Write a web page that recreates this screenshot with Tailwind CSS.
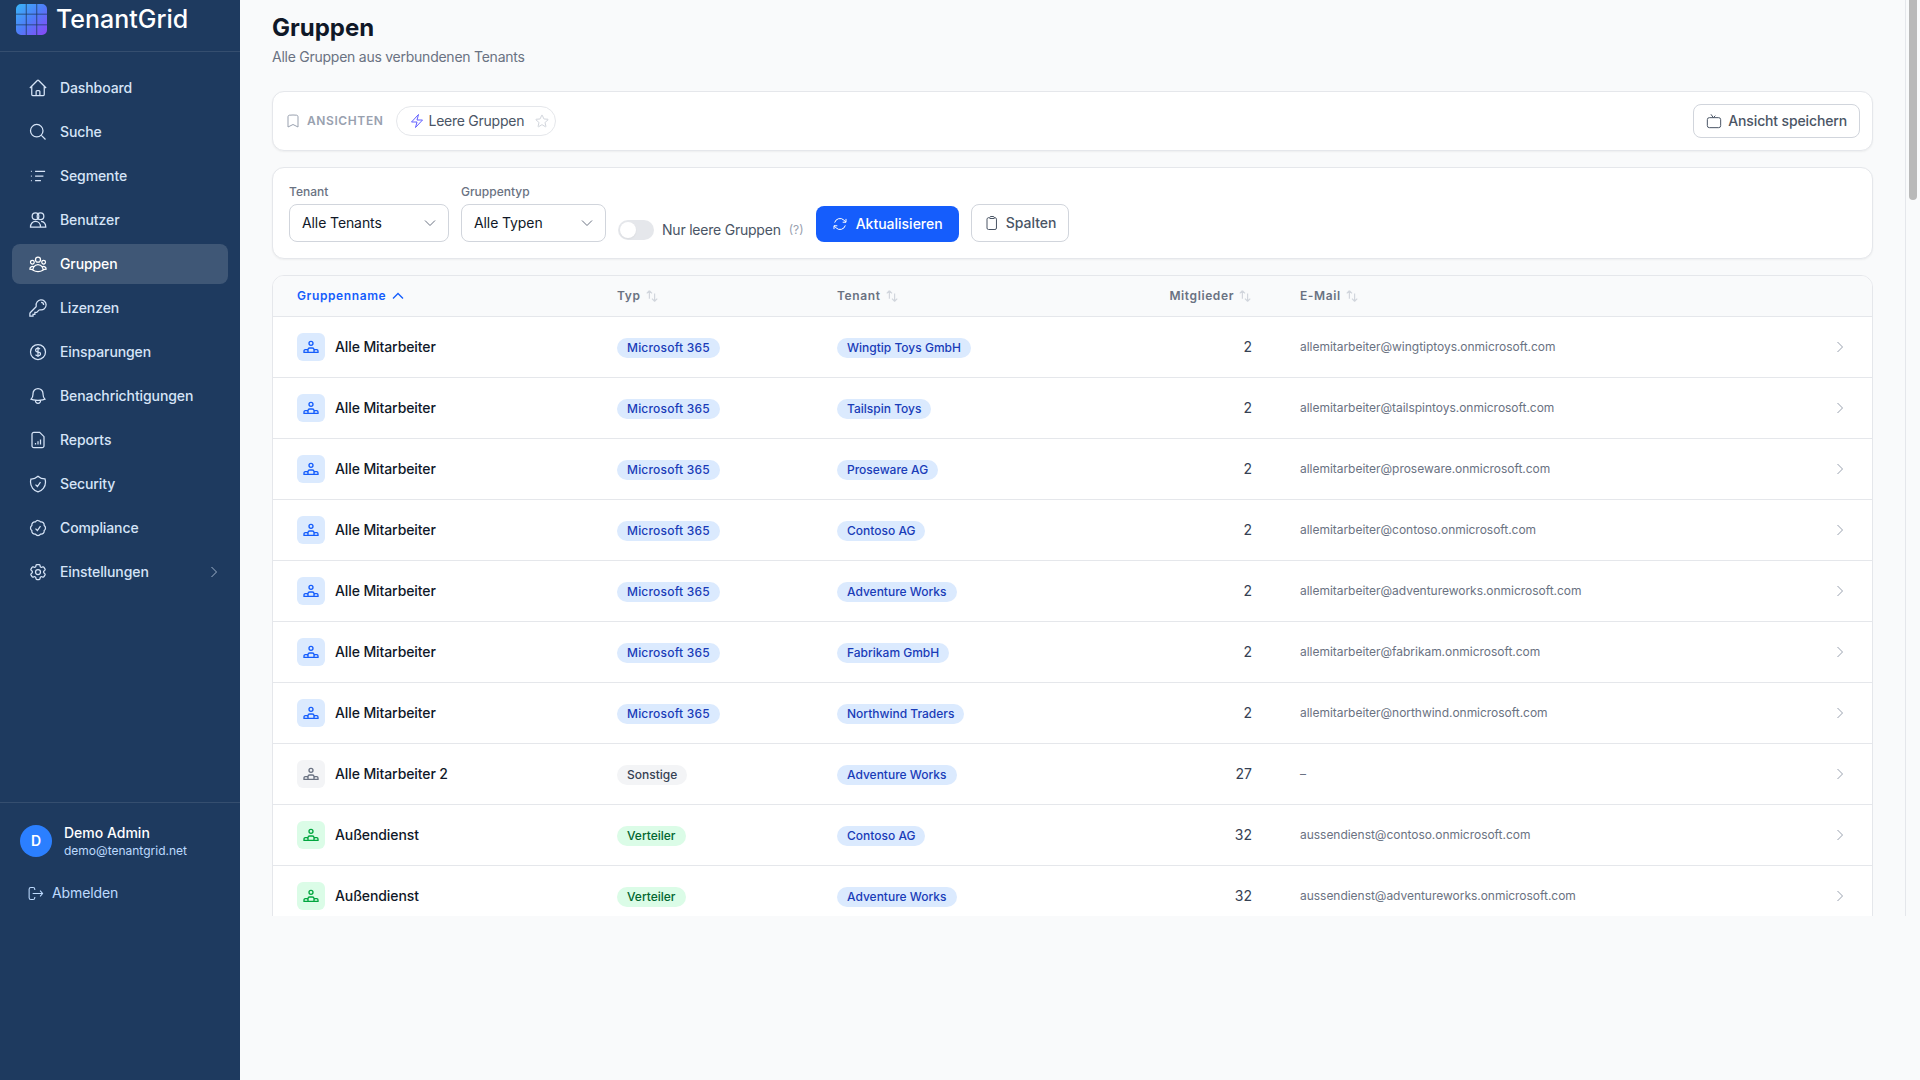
<!DOCTYPE html>
<html lang="de">
<head>
    <meta charset="UTF-8">
    <title>TenantGrid - Gruppen</title>
    <script src="https://cdn.jsdelivr.net/npm/@tailwindcss/browser@4"></script>
</head>
<body class="h-screen flex overflow-hidden bg-[#f9fafb] font-[Inter,sans-serif]">
    <svg class="hidden">
        <symbol id="i-home" viewBox="0 0 24 24"><path d="M2.25 12l8.954-8.955c.44-.439 1.152-.439 1.591 0L21.75 12M4.5 9.75v10.125c0 .621.504 1.125 1.125 1.125H9.75v-4.875c0-.621.504-1.125 1.125-1.125h2.25c.621 0 1.125.504 1.125 1.125V21h4.125c.621 0 1.125-.504 1.125-1.125V9.75M8.25 21h8.25"/></symbol>
        <symbol id="i-search" viewBox="0 0 24 24"><path d="m21 21-5.197-5.197m0 0A7.5 7.5 0 1 0 5.196 5.196a7.5 7.5 0 0 0 10.607 10.607Z"/></symbol>
        <symbol id="i-list" viewBox="0 0 24 24"><path d="M8.5 6.5h12M8.5 12h10M8.5 17.5h7M3.5 6.5h1M3.5 12h1M3.5 17.5h1"/></symbol>
        <symbol id="i-users" viewBox="0 0 24 24"><circle cx="9" cy="7.5" r="4"/><circle cx="15" cy="7.5" r="4"/><path d="M3 20.5c0-4 2.5-6.8 6-6.8s6 2.8 6 6.8H3ZM15 20.5h6.3c0-3.8-2.2-6.4-5.6-6.8"/></symbol>
        <symbol id="i-group" viewBox="0 0 24 24"><path d="M18 18.72a9.094 9.094 0 0 0 3.741-.479 3 3 0 0 0-4.682-2.72m.94 3.198.001.031c0 .225-.012.447-.037.666A11.944 11.944 0 0 1 12 21c-2.17 0-4.207-.576-5.963-1.584A6.062 6.062 0 0 1 6 18.719m12 0a5.971 5.971 0 0 0-.941-3.197m0 0A5.995 5.995 0 0 0 12 12.75a5.995 5.995 0 0 0-5.058 2.772m0 0a3 3 0 0 0-4.681 2.72 8.986 8.986 0 0 0 3.74.477m.94-3.197a5.971 5.971 0 0 0-.94 3.197M15 6.75a3 3 0 1 1-6 0 3 3 0 0 1 6 0Zm6 3a2.25 2.25 0 1 1-4.5 0 2.25 2.25 0 0 1 4.5 0Zm-13.5 0a2.25 2.25 0 1 1-4.5 0 2.25 2.25 0 0 1 4.5 0Z"/></symbol>
        <symbol id="i-key" viewBox="0 0 24 24"><path d="M15.75 5.25a3 3 0 0 1 3 3m3 0a6 6 0 0 1-7.029 5.912c-.563-.097-1.159.026-1.563.43L10.5 17.25H8.25v2.25H6v2.25H2.25v-2.818c0-.597.237-1.17.659-1.591l6.499-6.499c.404-.404.527-1 .43-1.563A6 6 0 1 1 21.75 8.25Z"/></symbol>
        <symbol id="i-dollar" viewBox="0 0 24 24"><path d="M12 6v12m-3-2.818.879.659c1.171.879 3.07.879 4.242 0 1.172-.879 1.172-2.303 0-3.182C13.536 12.219 12.768 12 12 12c-.725 0-1.45-.22-2.003-.659-1.106-.879-1.106-2.303 0-3.182s2.9-.879 4.006 0l.415.33M21 12a9 9 0 1 1-18 0 9 9 0 0 1 18 0Z"/></symbol>
        <symbol id="i-bell" viewBox="0 0 24 24"><path d="M14.857 17.082a23.848 23.848 0 0 0 5.454-1.31A8.967 8.967 0 0 1 18 9.75V9A6 6 0 0 0 6 9v.75a8.967 8.967 0 0 1-2.312 6.022c1.733.64 3.56 1.085 5.455 1.31m5.714 0a24.255 24.255 0 0 1-5.714 0m5.714 0a3 3 0 1 1-5.714 0"/></symbol>
        <symbol id="i-report" viewBox="0 0 24 24"><path d="M14 2.8H7A2.2 2.2 0 0 0 4.8 5v14A2.2 2.2 0 0 0 7 21.2h10a2.2 2.2 0 0 0 2.2-2.2V8L14 2.8ZM9 17.5v-2M12 17.5v-4M15 17.5v-6"/></symbol>
        <symbol id="i-shield" viewBox="0 0 24 24"><path d="M9 12.75 11.25 15 15 9.75m-3-7.036A11.959 11.959 0 0 1 3.598 6 11.99 11.99 0 0 0 3 9.749c0 5.592 3.824 10.29 9 11.623 5.176-1.332 9-6.03 9-11.622 0-1.31-.21-2.571-.598-3.751h-.152c-3.196 0-6.1-1.248-8.25-3.285Z"/></symbol>
        <symbol id="i-badge" viewBox="0 0 24 24"><path d="M9 12.75 11.25 15 15 9.75M21 12c0 1.268-.63 2.39-1.593 3.068a3.745 3.745 0 0 1-1.043 3.296 3.745 3.745 0 0 1-3.296 1.043A3.745 3.745 0 0 1 12 21c-1.268 0-2.39-.63-3.068-1.593a3.746 3.746 0 0 1-3.296-1.043 3.745 3.745 0 0 1-1.043-3.296A3.745 3.745 0 0 1 3 12c0-1.268.63-2.39 1.593-3.068a3.745 3.745 0 0 1 1.043-3.296 3.746 3.746 0 0 1 3.296-1.043A3.746 3.746 0 0 1 12 3c1.268 0 2.39.63 3.068 1.593a3.746 3.746 0 0 1 3.296 1.043 3.746 3.746 0 0 1 1.043 3.296A3.745 3.745 0 0 1 21 12Z"/></symbol>
        <symbol id="i-cog" viewBox="0 0 24 24"><path d="M9.594 3.94c.09-.542.56-.94 1.11-.94h2.593c.55 0 1.02.398 1.11.94l.213 1.281c.063.374.313.686.645.87.074.04.147.083.22.127.325.196.72.257 1.075.124l1.217-.456a1.125 1.125 0 0 1 1.37.49l1.296 2.247a1.125 1.125 0 0 1-.26 1.431l-1.003.827c-.293.241-.438.613-.43.992a7.723 7.723 0 0 1 0 .255c-.008.378.137.75.43.991l1.004.827c.424.35.534.955.26 1.43l-1.298 2.247a1.125 1.125 0 0 1-1.369.491l-1.217-.456c-.355-.133-.75-.072-1.076.124a6.47 6.47 0 0 1-.22.128c-.331.183-.581.495-.644.869l-.213 1.281c-.09.543-.56.94-1.11.94h-2.594c-.55 0-1.019-.398-1.11-.94l-.213-1.281c-.062-.374-.312-.686-.644-.87a6.52 6.52 0 0 1-.22-.127c-.325-.196-.72-.257-1.076-.124l-1.217.456a1.125 1.125 0 0 1-1.369-.49l-1.297-2.247a1.125 1.125 0 0 1 .26-1.431l1.004-.827c.292-.24.437-.613.43-.991a6.932 6.932 0 0 1 0-.255c.007-.38-.138-.751-.43-.992l-1.004-.827a1.125 1.125 0 0 1-.26-1.43l1.297-2.247a1.125 1.125 0 0 1 1.37-.491l1.216.456c.356.133.751.072 1.076-.124.072-.044.146-.086.22-.128.332-.183.582-.495.644-.869l.214-1.28Z"/><path d="M15 12a3 3 0 1 1-6 0 3 3 0 0 1 6 0Z"/></symbol>
        <symbol id="i-logout" viewBox="0 0 24 24"><path d="M11 7V6a2.5 2.5 0 0 0-2.5-2.5h-3A2.5 2.5 0 0 0 3 6v12a2.5 2.5 0 0 0 2.5 2.5h3A2.5 2.5 0 0 0 11 18v-1M8 12h14M18.5 8l3.5 4-3.5 4"/></symbol>
        <symbol id="i-bookmark" viewBox="0 0 24 24"><path d="M17.593 3.322c1.1.128 1.907 1.077 1.907 2.185V21L12 17.25 4.5 21V5.507c0-1.108.806-2.057 1.907-2.185a48.507 48.507 0 0 1 11.186 0Z"/></symbol>
        <symbol id="i-bolt" viewBox="0 0 24 24"><path d="m3.75 13.5 10.5-11.25L12 10.5h8.25L9.75 21.75 12 13.5H3.75Z"/></symbol>
        <symbol id="i-star" viewBox="0 0 24 24"><path d="M11.48 3.499a.562.562 0 0 1 1.04 0l2.125 5.111a.563.563 0 0 0 .475.345l5.518.442c.499.04.701.663.321.988l-4.204 3.602a.563.563 0 0 0-.182.557l1.285 5.385a.562.562 0 0 1-.84.61l-4.725-2.885a.562.562 0 0 0-.586 0L6.982 20.54a.562.562 0 0 1-.84-.61l1.285-5.386a.562.562 0 0 0-.182-.557l-4.204-3.602a.562.562 0 0 1 .321-.988l5.518-.442a.563.563 0 0 0 .475-.345L11.48 3.5Z"/></symbol>
        <symbol id="i-save" viewBox="0 0 24 24"><path d="M5 7h14a3 3 0 0 1 3 3v9a3 3 0 0 1-3 3H5a3 3 0 0 1-3-3v-9a3 3 0 0 1 3-3ZM7.5 2 11 7l3-3"/></symbol>
        <symbol id="i-refresh" viewBox="0 0 24 24"><path d="M16.023 9.348h4.992v-.001M2.985 19.644v-4.992m0 0h4.992m-4.993 0 3.181 3.183a8.25 8.25 0 0 0 13.803-3.7M4.031 9.865a8.25 8.25 0 0 1 13.803-3.7l3.181 3.182m0-4.991v4.99"/></symbol>
        <symbol id="i-clipboard" viewBox="0 0 24 24"><path d="M15.666 3.888A2.25 2.25 0 0 0 13.5 2.25h-3c-1.03 0-1.9.693-2.166 1.638m7.332 0c.055.194.084.4.084.612v0a.75.75 0 0 1-.75.75H9a.75.75 0 0 1-.75-.75v0c0-.212.03-.418.084-.612m7.332 0c.369.03.739.067 1.108.11 1.1.128 1.907 1.077 1.907 2.185V19.5a2.25 2.25 0 0 1-2.25 2.25H6.75A2.25 2.25 0 0 1 4.5 19.5V6.257c0-1.108.806-2.057 1.907-2.185.37-.043.74-.08 1.109-.11"/></symbol>
        <symbol id="i-down" viewBox="0 0 24 24"><path d="m19.5 8.25-7.5 7.5-7.5-7.5"/></symbol>
        <symbol id="i-up" viewBox="0 0 24 24"><path d="m4.5 15.75 7.5-7.5 7.5 7.5"/></symbol>
        <symbol id="i-right" viewBox="0 0 24 24"><path d="m8.25 4.5 7.5 7.5-7.5 7.5"/></symbol>
        <symbol id="i-sort" viewBox="0 0 24 24"><path d="M3 7.5 7.5 3m0 0L12 7.5M7.5 3v13.5m13.5 0L16.5 21m0 0L12 16.5m4.5 4.5V7.5"/></symbol>
        <symbol id="i-org" viewBox="0 0 24 24"><circle cx="12" cy="6.5" r="3"/><path d="M7.5 20v-4a2.5 2.5 0 0 1 2.5-2.5h4a2.5 2.5 0 0 1 2.5 2.5v4M1.5 18a2 2 0 0 1 2-2h2a2 2 0 0 1 2 2v2h-6v-2ZM16.5 18a2 2 0 0 1 2-2h2a2 2 0 0 1 2 2v2h-6v-2ZM7.5 20h9"/></symbol>
    </svg>

    <!-- sidebar -->
    <aside class="w-60 shrink-0 h-screen bg-[#1e3a5f]">
        <div class="h-[916px] flex flex-col">
            <div class="h-[52px] shrink-0 border-b border-white/10 flex items-start pl-4 pt-1 gap-[9px]">
                <svg class="w-[31px] h-[31px] shrink-0" viewBox="0 0 31 31">
                    <defs>
                        <linearGradient id="logo" gradientUnits="userSpaceOnUse" x1="0" y1="0" x2="31" y2="31">
                            <stop offset="0" stop-color="#38b6f8"/>
                            <stop offset="0.5" stop-color="#4f7cf8"/>
                            <stop offset="1" stop-color="#8b45f5"/>
                        </linearGradient>
                    </defs>
                    <path fill="url(#logo)" d="M5 0h4.8v9.8H0V5a5 5 0 0 1 5-5ZM10.6 0h9.8v9.8h-9.8ZM21.2 0H26a5 5 0 0 1 5 5v4.8h-9.8ZM0 10.6h9.8v9.8H0ZM10.6 10.6h9.8v9.8h-9.8ZM21.2 10.6H31v9.8h-9.8ZM0 21.2h9.8V31H5a5 5 0 0 1-5-5ZM10.6 21.2h9.8V31h-9.8ZM21.2 21.2H31V26a5 5 0 0 1-5 5h-4.8Z"/>
                </svg>
                <span class="text-[25px] leading-[30px] font-medium text-white">TenantGrid</span>
            </div>

            <nav class="flex-1 flex flex-col gap-1 px-3 pt-4 text-sm font-medium tracking-[-0.1px] text-[#d6e4f7]">
                <a class="h-10 flex items-center gap-3 px-4 rounded-lg"><svg class="w-5 h-5 fill-none stroke-current stroke-[1.5]"><use href="#i-home"/></svg>Dashboard</a>
                <a class="h-10 flex items-center gap-3 px-4 rounded-lg"><svg class="w-5 h-5 fill-none stroke-current stroke-[1.5]"><use href="#i-search"/></svg>Suche</a>
                <a class="h-10 flex items-center gap-3 px-4 rounded-lg"><svg class="w-5 h-5 fill-none stroke-current stroke-[1.5]"><use href="#i-list"/></svg>Segmente</a>
                <a class="h-10 flex items-center gap-3 px-4 rounded-lg"><svg class="w-5 h-5 fill-none stroke-current stroke-[1.5]"><use href="#i-users"/></svg>Benutzer</a>
                <a class="h-10 flex items-center gap-3 px-4 rounded-lg bg-white/15 text-white"><svg class="w-5 h-5 fill-none stroke-current stroke-[1.5]"><use href="#i-group"/></svg>Gruppen</a>
                <a class="h-10 flex items-center gap-3 px-4 rounded-lg"><svg class="w-5 h-5 fill-none stroke-current stroke-[1.5]"><use href="#i-key"/></svg>Lizenzen</a>
                <a class="h-10 flex items-center gap-3 px-4 rounded-lg"><svg class="w-5 h-5 fill-none stroke-current stroke-[1.5]"><use href="#i-dollar"/></svg>Einsparungen</a>
                <a class="h-10 flex items-center gap-3 px-4 rounded-lg"><svg class="w-5 h-5 fill-none stroke-current stroke-[1.5]"><use href="#i-bell"/></svg>Benachrichtigungen</a>
                <a class="h-10 flex items-center gap-3 px-4 rounded-lg"><svg class="w-5 h-5 fill-none stroke-current stroke-[1.5]"><use href="#i-report"/></svg>Reports</a>
                <a class="h-10 flex items-center gap-3 px-4 rounded-lg"><svg class="w-5 h-5 fill-none stroke-current stroke-[1.5]"><use href="#i-shield"/></svg>Security</a>
                <a class="h-10 flex items-center gap-3 px-4 rounded-lg"><svg class="w-5 h-5 fill-none stroke-current stroke-[1.5]"><use href="#i-badge"/></svg>Compliance</a>
                <a class="h-10 flex items-center gap-3 px-4 rounded-lg"><svg class="w-5 h-5 fill-none stroke-current stroke-[1.5]"><use href="#i-cog"/></svg>Einstellungen<svg class="w-4 h-4 ml-auto -mr-2.5 fill-none stroke-current stroke-[1.5] opacity-70"><use href="#i-right"/></svg></a>
            </nav>

            <div class="border-t border-white/10 pt-5 pb-[13px]">
                <div class="flex items-center gap-3 px-5">
                    <div class="w-8 h-8 rounded-full bg-blue-500 flex items-center justify-center text-sm font-semibold text-white">D</div>
                    <div>
                        <div class="text-sm leading-5 font-medium text-white">Demo Admin</div>
                        <div class="text-xs leading-4 text-blue-200">demo@tenantgrid.net</div>
                    </div>
                </div>
                <a class="mt-6 h-5 flex items-center gap-2 pl-[27px] text-sm tracking-[-0.1px] text-blue-200"><svg class="w-[17px] h-[17px] fill-none stroke-current stroke-[1.5]"><use href="#i-logout"/></svg>Abmelden</a>
            </div>
        </div>
    </aside>

    <main class="flex-1 min-w-0">
        <div class="h-[916px] flex overflow-hidden">
            <div class="flex-1 min-w-0 pl-8 pr-8 pt-3">
                <h1 class="text-2xl leading-8 font-bold text-gray-900">Gruppen</h1>
                <p class="mt-[3px] text-sm leading-5 tracking-[-0.25px] text-gray-500">Alle Gruppen aus verbundenen Tenants</p>

                <!-- gespeicherte Ansichten -->
                <div class="mt-6 h-[60px] flex items-center justify-between px-3 bg-white border border-gray-200 rounded-xl shadow-xs">
                    <div class="flex items-center">
                        <svg class="w-4 h-4 fill-none stroke-gray-400 stroke-[1.5]"><use href="#i-bookmark"/></svg>
                        <span class="ml-1.5 text-xs font-semibold tracking-wider text-gray-400">ANSICHTEN</span>
                        <div class="ml-[13px] h-[30px] flex items-center pl-3 pr-[5px] border border-gray-200 rounded-full text-sm tracking-[-0.25px] text-gray-600">
                            <svg class="w-4 h-4 mr-[3px] fill-none stroke-indigo-500 stroke-[1.5]"><use href="#i-bolt"/></svg>
                            Leere Gruppen
                            <svg class="w-4 h-4 ml-2.5 fill-none stroke-gray-300 stroke-[1.5]"><use href="#i-star"/></svg>
                        </div>
                    </div>
                    <button class="h-[34px] flex items-center gap-1.5 px-3 bg-white border border-gray-300 rounded-lg text-sm font-medium tracking-[-0.14px] text-gray-600">
                        <svg class="w-4 h-4 fill-none stroke-current stroke-[1.5]"><use href="#i-save"/></svg>
                        Ansicht speichern
                    </button>
                </div>

                <!-- filter -->
                <div class="mt-4 flex items-end gap-3 p-4 bg-white border border-gray-200 rounded-xl shadow-xs">
                    <div class="w-40">
                        <div class="mb-1 text-xs leading-4 font-medium text-gray-500">Tenant</div>
                        <div class="h-[38px] flex items-center justify-between pl-3 pr-2.5 border border-gray-300 rounded-lg text-sm tracking-[-0.1px] text-gray-900">Alle Tenants<svg class="w-4 h-4 fill-none stroke-gray-500 stroke-[1.5]"><use href="#i-down"/></svg></div>
                    </div>
                    <div class="w-[145px]">
                        <div class="mb-1 text-xs leading-4 font-medium text-gray-500">Gruppentyp</div>
                        <div class="h-[38px] flex items-center justify-between pl-3 pr-2.5 border border-gray-300 rounded-lg text-sm tracking-[-0.1px] text-gray-900">Alle Typen<svg class="w-4 h-4 fill-none stroke-gray-500 stroke-[1.5]"><use href="#i-down"/></svg></div>
                    </div>
                    <div class="flex items-center h-5 mb-0.5">
                        <div class="w-9 h-5 p-0.5 rounded-full bg-gray-200"><div class="w-4 h-4 rounded-full bg-white shadow-xs"></div></div>
                        <span class="ml-2 text-sm tracking-[-0.22px] text-gray-600">Nur leere Gruppen</span>
                        <span class="ml-2 text-xs text-gray-400">(?)</span>
                    </div>
                    <button class="h-9 flex items-center gap-2 px-4 bg-blue-600 rounded-lg text-sm font-medium text-white">
                        <svg class="w-4 h-4 fill-none stroke-current stroke-[1.5]"><use href="#i-refresh"/></svg>
                        Aktualisieren
                    </button>
                    <button class="h-[38px] flex items-center gap-1.5 px-3 bg-white border border-gray-300 rounded-lg text-sm font-medium text-gray-600">
                        <svg class="w-4 h-4 fill-none stroke-current stroke-[1.5]"><use href="#i-clipboard"/></svg>
                        Spalten
                    </button>
                </div>

                <!-- tabelle -->
                <div class="mt-4 bg-white border border-gray-200 rounded-t-xl overflow-hidden">
                    <table class="w-full table-fixed border-separate border-spacing-0">
                        <thead>
                            <tr class="bg-[#f9fafb] text-xs font-semibold tracking-wider text-gray-500 text-left">
                                <th class="w-[320px] h-[41px] pl-6 border-b border-gray-200 font-semibold text-blue-600"><span class="inline-flex items-center gap-1">Gruppenname<svg class="w-4 h-4 fill-none stroke-current stroke-2"><use href="#i-up"/></svg></span></th>
                                <th class="w-[220px] h-[41px] pl-6 border-b border-gray-200 font-semibold"><span class="inline-flex items-center gap-1">Typ<svg class="w-3.5 h-3.5 fill-none stroke-gray-300 stroke-2"><use href="#i-sort"/></svg></span></th>
                                <th class="w-[307px] h-[41px] pl-6 border-b border-gray-200 font-semibold"><span class="inline-flex items-center gap-1">Tenant<svg class="w-3.5 h-3.5 fill-none stroke-gray-300 stroke-2"><use href="#i-sort"/></svg></span></th>
                                <th class="w-[156px] h-[41px] pr-6 border-b border-gray-200 font-semibold text-right"><span class="inline-flex items-center gap-1">Mitglieder<svg class="w-3.5 h-3.5 fill-none stroke-gray-300 stroke-2"><use href="#i-sort"/></svg></span></th>
                                <th class="h-[41px] pl-6 border-b border-gray-200 font-semibold"><span class="inline-flex items-center gap-1">E-Mail<svg class="w-3.5 h-3.5 fill-none stroke-gray-300 stroke-2"><use href="#i-sort"/></svg></span></th>
                                <th class="w-[55px] h-[41px] border-b border-gray-200"></th>
                            </tr>
                        </thead>
                        <tbody>
                            <tr>
                                <td class="h-[61px] pl-6 border-b border-gray-200"><div class="flex items-center gap-2.5"><span class="w-7 h-7 flex items-center justify-center rounded-md bg-blue-100 text-blue-600"><svg class="w-4 h-4 fill-none stroke-current stroke-2"><use href="#i-org"/></svg></span><span class="text-sm font-medium tracking-[-0.1px] text-gray-900">Alle Mitarbeiter</span></div></td>
                                <td class="pl-6 border-b border-gray-200"><span class="block w-fit mt-[2px] px-2.5 text-xs leading-5 font-medium tracking-[0.2px] rounded-full bg-blue-100 text-blue-800">Microsoft 365</span></td>
                                <td class="pl-6 border-b border-gray-200"><span class="block w-fit mt-[2px] px-2.5 text-xs leading-5 font-medium rounded-full bg-blue-100 text-blue-800">Wingtip Toys GmbH</span></td>
                                <td class="pr-6 border-b border-gray-200 text-right text-sm text-gray-700">2</td>
                                <td class="pl-6 border-b border-gray-200 text-xs tracking-[-0.03px] text-gray-500">allemitarbeiter@wingtiptoys.onmicrosoft.com</td>
                                <td class="pr-6 border-b border-gray-200"><svg class="w-4 h-4 ml-auto fill-none stroke-gray-400 stroke-[1.5]"><use href="#i-right"/></svg></td>
                            </tr>
                            <tr>
                                <td class="h-[61px] pl-6 border-b border-gray-200"><div class="flex items-center gap-2.5"><span class="w-7 h-7 flex items-center justify-center rounded-md bg-blue-100 text-blue-600"><svg class="w-4 h-4 fill-none stroke-current stroke-2"><use href="#i-org"/></svg></span><span class="text-sm font-medium tracking-[-0.1px] text-gray-900">Alle Mitarbeiter</span></div></td>
                                <td class="pl-6 border-b border-gray-200"><span class="block w-fit mt-[2px] px-2.5 text-xs leading-5 font-medium tracking-[0.2px] rounded-full bg-blue-100 text-blue-800">Microsoft 365</span></td>
                                <td class="pl-6 border-b border-gray-200"><span class="block w-fit mt-[2px] px-2.5 text-xs leading-5 font-medium rounded-full bg-blue-100 text-blue-800">Tailspin Toys</span></td>
                                <td class="pr-6 border-b border-gray-200 text-right text-sm text-gray-700">2</td>
                                <td class="pl-6 border-b border-gray-200 text-xs tracking-[-0.03px] text-gray-500">allemitarbeiter@tailspintoys.onmicrosoft.com</td>
                                <td class="pr-6 border-b border-gray-200"><svg class="w-4 h-4 ml-auto fill-none stroke-gray-400 stroke-[1.5]"><use href="#i-right"/></svg></td>
                            </tr>
                            <tr>
                                <td class="h-[61px] pl-6 border-b border-gray-200"><div class="flex items-center gap-2.5"><span class="w-7 h-7 flex items-center justify-center rounded-md bg-blue-100 text-blue-600"><svg class="w-4 h-4 fill-none stroke-current stroke-2"><use href="#i-org"/></svg></span><span class="text-sm font-medium tracking-[-0.1px] text-gray-900">Alle Mitarbeiter</span></div></td>
                                <td class="pl-6 border-b border-gray-200"><span class="block w-fit mt-[2px] px-2.5 text-xs leading-5 font-medium tracking-[0.2px] rounded-full bg-blue-100 text-blue-800">Microsoft 365</span></td>
                                <td class="pl-6 border-b border-gray-200"><span class="block w-fit mt-[2px] px-2.5 text-xs leading-5 font-medium rounded-full bg-blue-100 text-blue-800">Proseware AG</span></td>
                                <td class="pr-6 border-b border-gray-200 text-right text-sm text-gray-700">2</td>
                                <td class="pl-6 border-b border-gray-200 text-xs tracking-[-0.03px] text-gray-500">allemitarbeiter@proseware.onmicrosoft.com</td>
                                <td class="pr-6 border-b border-gray-200"><svg class="w-4 h-4 ml-auto fill-none stroke-gray-400 stroke-[1.5]"><use href="#i-right"/></svg></td>
                            </tr>
                            <tr>
                                <td class="h-[61px] pl-6 border-b border-gray-200"><div class="flex items-center gap-2.5"><span class="w-7 h-7 flex items-center justify-center rounded-md bg-blue-100 text-blue-600"><svg class="w-4 h-4 fill-none stroke-current stroke-2"><use href="#i-org"/></svg></span><span class="text-sm font-medium tracking-[-0.1px] text-gray-900">Alle Mitarbeiter</span></div></td>
                                <td class="pl-6 border-b border-gray-200"><span class="block w-fit mt-[2px] px-2.5 text-xs leading-5 font-medium tracking-[0.2px] rounded-full bg-blue-100 text-blue-800">Microsoft 365</span></td>
                                <td class="pl-6 border-b border-gray-200"><span class="block w-fit mt-[2px] px-2.5 text-xs leading-5 font-medium rounded-full bg-blue-100 text-blue-800">Contoso AG</span></td>
                                <td class="pr-6 border-b border-gray-200 text-right text-sm text-gray-700">2</td>
                                <td class="pl-6 border-b border-gray-200 text-xs tracking-[-0.03px] text-gray-500">allemitarbeiter@contoso.onmicrosoft.com</td>
                                <td class="pr-6 border-b border-gray-200"><svg class="w-4 h-4 ml-auto fill-none stroke-gray-400 stroke-[1.5]"><use href="#i-right"/></svg></td>
                            </tr>
                            <tr>
                                <td class="h-[61px] pl-6 border-b border-gray-200"><div class="flex items-center gap-2.5"><span class="w-7 h-7 flex items-center justify-center rounded-md bg-blue-100 text-blue-600"><svg class="w-4 h-4 fill-none stroke-current stroke-2"><use href="#i-org"/></svg></span><span class="text-sm font-medium tracking-[-0.1px] text-gray-900">Alle Mitarbeiter</span></div></td>
                                <td class="pl-6 border-b border-gray-200"><span class="block w-fit mt-[2px] px-2.5 text-xs leading-5 font-medium tracking-[0.2px] rounded-full bg-blue-100 text-blue-800">Microsoft 365</span></td>
                                <td class="pl-6 border-b border-gray-200"><span class="block w-fit mt-[2px] px-2.5 text-xs leading-5 font-medium rounded-full bg-blue-100 text-blue-800">Adventure Works</span></td>
                                <td class="pr-6 border-b border-gray-200 text-right text-sm text-gray-700">2</td>
                                <td class="pl-6 border-b border-gray-200 text-xs tracking-[-0.03px] text-gray-500">allemitarbeiter@adventureworks.onmicrosoft.com</td>
                                <td class="pr-6 border-b border-gray-200"><svg class="w-4 h-4 ml-auto fill-none stroke-gray-400 stroke-[1.5]"><use href="#i-right"/></svg></td>
                            </tr>
                            <tr>
                                <td class="h-[61px] pl-6 border-b border-gray-200"><div class="flex items-center gap-2.5"><span class="w-7 h-7 flex items-center justify-center rounded-md bg-blue-100 text-blue-600"><svg class="w-4 h-4 fill-none stroke-current stroke-2"><use href="#i-org"/></svg></span><span class="text-sm font-medium tracking-[-0.1px] text-gray-900">Alle Mitarbeiter</span></div></td>
                                <td class="pl-6 border-b border-gray-200"><span class="block w-fit mt-[2px] px-2.5 text-xs leading-5 font-medium tracking-[0.2px] rounded-full bg-blue-100 text-blue-800">Microsoft 365</span></td>
                                <td class="pl-6 border-b border-gray-200"><span class="block w-fit mt-[2px] px-2.5 text-xs leading-5 font-medium rounded-full bg-blue-100 text-blue-800">Fabrikam GmbH</span></td>
                                <td class="pr-6 border-b border-gray-200 text-right text-sm text-gray-700">2</td>
                                <td class="pl-6 border-b border-gray-200 text-xs tracking-[-0.03px] text-gray-500">allemitarbeiter@fabrikam.onmicrosoft.com</td>
                                <td class="pr-6 border-b border-gray-200"><svg class="w-4 h-4 ml-auto fill-none stroke-gray-400 stroke-[1.5]"><use href="#i-right"/></svg></td>
                            </tr>
                            <tr>
                                <td class="h-[61px] pl-6 border-b border-gray-200"><div class="flex items-center gap-2.5"><span class="w-7 h-7 flex items-center justify-center rounded-md bg-blue-100 text-blue-600"><svg class="w-4 h-4 fill-none stroke-current stroke-2"><use href="#i-org"/></svg></span><span class="text-sm font-medium tracking-[-0.1px] text-gray-900">Alle Mitarbeiter</span></div></td>
                                <td class="pl-6 border-b border-gray-200"><span class="block w-fit mt-[2px] px-2.5 text-xs leading-5 font-medium tracking-[0.2px] rounded-full bg-blue-100 text-blue-800">Microsoft 365</span></td>
                                <td class="pl-6 border-b border-gray-200"><span class="block w-fit mt-[2px] px-2.5 text-xs leading-5 font-medium rounded-full bg-blue-100 text-blue-800">Northwind Traders</span></td>
                                <td class="pr-6 border-b border-gray-200 text-right text-sm text-gray-700">2</td>
                                <td class="pl-6 border-b border-gray-200 text-xs tracking-[-0.03px] text-gray-500">allemitarbeiter@northwind.onmicrosoft.com</td>
                                <td class="pr-6 border-b border-gray-200"><svg class="w-4 h-4 ml-auto fill-none stroke-gray-400 stroke-[1.5]"><use href="#i-right"/></svg></td>
                            </tr>
                            <tr>
                                <td class="h-[61px] pl-6 border-b border-gray-200"><div class="flex items-center gap-2.5"><span class="w-7 h-7 flex items-center justify-center rounded-md bg-gray-100 text-gray-500"><svg class="w-4 h-4 fill-none stroke-current stroke-2"><use href="#i-org"/></svg></span><span class="text-sm font-medium tracking-[-0.1px] text-gray-900">Alle Mitarbeiter 2</span></div></td>
                                <td class="pl-6 border-b border-gray-200"><span class="block w-fit mt-[2px] px-2.5 text-xs leading-5 font-medium rounded-full bg-gray-100 text-gray-700">Sonstige</span></td>
                                <td class="pl-6 border-b border-gray-200"><span class="block w-fit mt-[2px] px-2.5 text-xs leading-5 font-medium rounded-full bg-blue-100 text-blue-800">Adventure Works</span></td>
                                <td class="pr-6 border-b border-gray-200 text-right text-sm text-gray-700">27</td>
                                <td class="pl-6 border-b border-gray-200 text-xs text-gray-500">–</td>
                                <td class="pr-6 border-b border-gray-200"><svg class="w-4 h-4 ml-auto fill-none stroke-gray-400 stroke-[1.5]"><use href="#i-right"/></svg></td>
                            </tr>
                            <tr>
                                <td class="h-[61px] pl-6 border-b border-gray-200"><div class="flex items-center gap-2.5"><span class="w-7 h-7 flex items-center justify-center rounded-md bg-green-100 text-green-600"><svg class="w-4 h-4 fill-none stroke-current stroke-2"><use href="#i-org"/></svg></span><span class="text-sm font-medium tracking-[-0.1px] text-gray-900">Außendienst</span></div></td>
                                <td class="pl-6 border-b border-gray-200"><span class="block w-fit mt-[2px] px-2.5 text-xs leading-5 font-medium rounded-full bg-green-100 text-green-800">Verteiler</span></td>
                                <td class="pl-6 border-b border-gray-200"><span class="block w-fit mt-[2px] px-2.5 text-xs leading-5 font-medium rounded-full bg-blue-100 text-blue-800">Contoso AG</span></td>
                                <td class="pr-6 border-b border-gray-200 text-right text-sm text-gray-700">32</td>
                                <td class="pl-6 border-b border-gray-200 text-xs tracking-[-0.03px] text-gray-500">aussendienst@contoso.onmicrosoft.com</td>
                                <td class="pr-6 border-b border-gray-200"><svg class="w-4 h-4 ml-auto fill-none stroke-gray-400 stroke-[1.5]"><use href="#i-right"/></svg></td>
                            </tr>
                            <tr>
                                <td class="h-[61px] pl-6 border-b border-gray-200"><div class="flex items-center gap-2.5"><span class="w-7 h-7 flex items-center justify-center rounded-md bg-green-100 text-green-600"><svg class="w-4 h-4 fill-none stroke-current stroke-2"><use href="#i-org"/></svg></span><span class="text-sm font-medium tracking-[-0.1px] text-gray-900">Außendienst</span></div></td>
                                <td class="pl-6 border-b border-gray-200"><span class="block w-fit mt-[2px] px-2.5 text-xs leading-5 font-medium rounded-full bg-green-100 text-green-800">Verteiler</span></td>
                                <td class="pl-6 border-b border-gray-200"><span class="block w-fit mt-[2px] px-2.5 text-xs leading-5 font-medium rounded-full bg-blue-100 text-blue-800">Adventure Works</span></td>
                                <td class="pr-6 border-b border-gray-200 text-right text-sm text-gray-700">32</td>
                                <td class="pl-6 border-b border-gray-200 text-xs tracking-[-0.03px] text-gray-500">aussendienst@adventureworks.onmicrosoft.com</td>
                                <td class="pr-6 border-b border-gray-200"><svg class="w-4 h-4 ml-auto fill-none stroke-gray-400 stroke-[1.5]"><use href="#i-right"/></svg></td>
                            </tr>
                        </tbody>
                    </table>
                </div>
            </div>

            <!-- scrollbar -->
            <div class="w-[15px] shrink-0 border-l border-gray-200 pl-[3px]">
                <div class="w-2 h-[200px] rounded-b-full bg-[#b9b9b9]"></div>
            </div>
        </div>
    </main>
</body>
</html>
